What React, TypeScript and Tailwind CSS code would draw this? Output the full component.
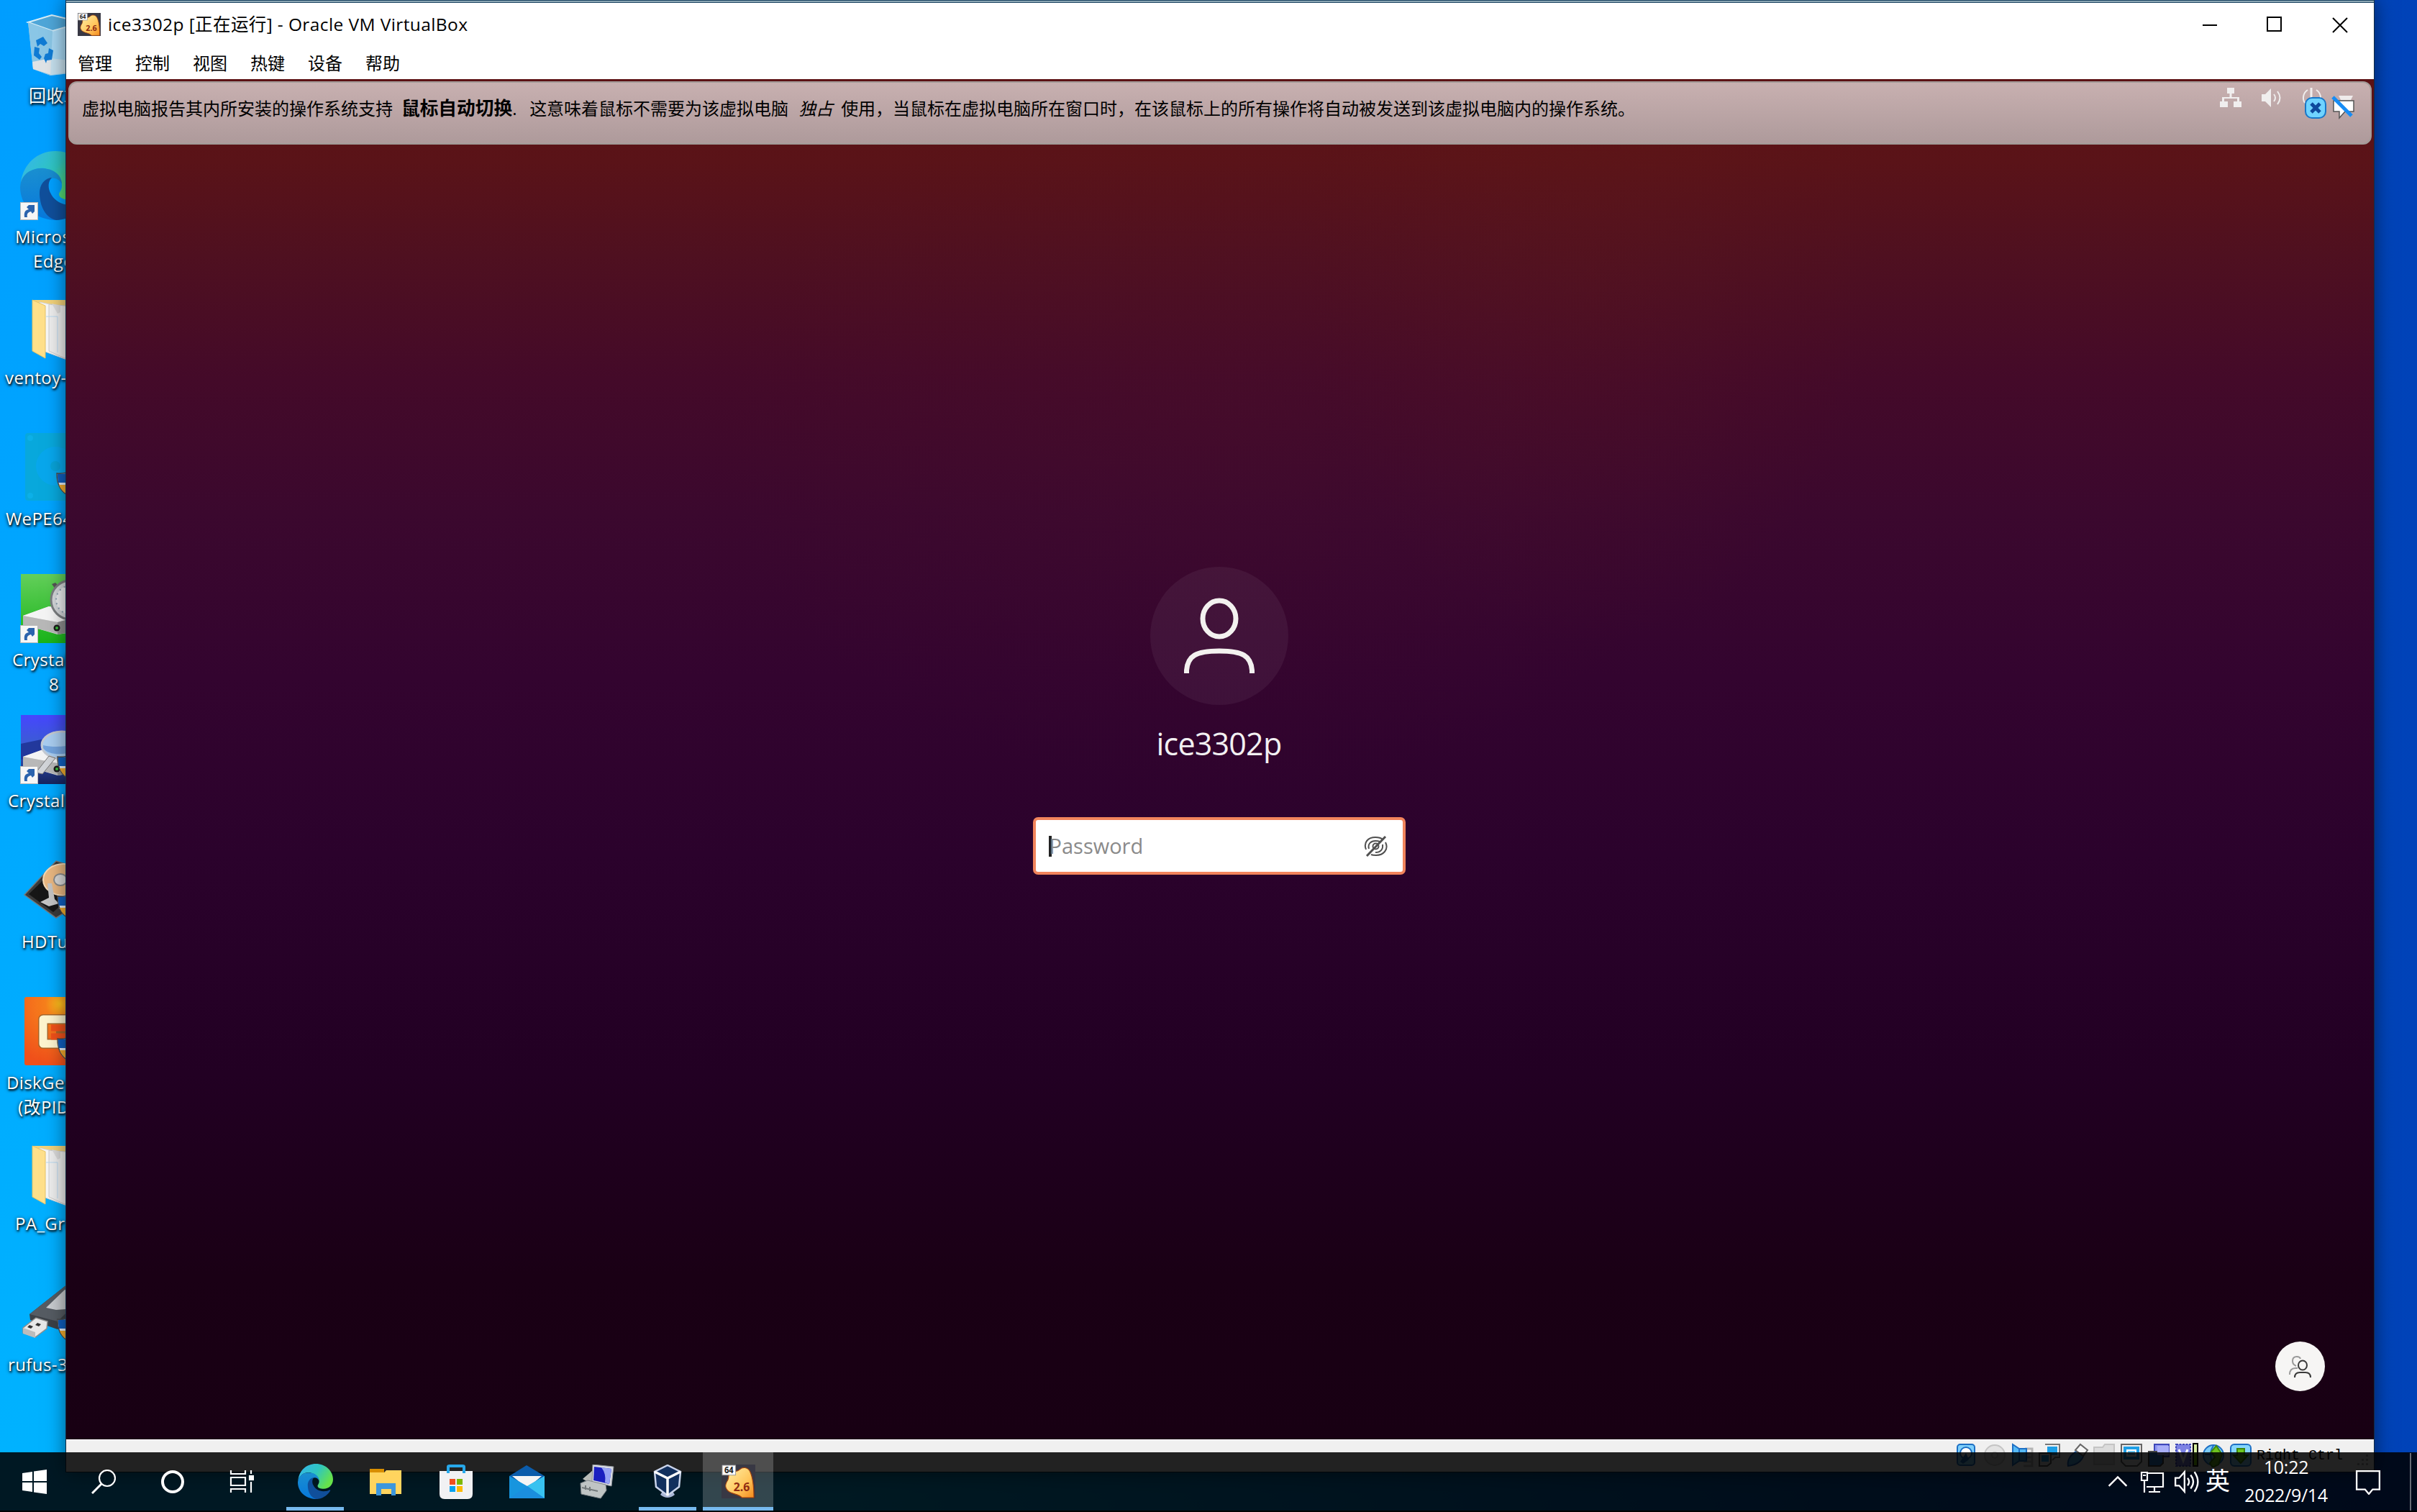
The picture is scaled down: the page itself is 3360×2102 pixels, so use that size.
import React from "react";

type P = { className?: string };

const Arrow = () => (
  <svg className="absolute bottom-0 left-0 size-[25px]" viewBox="0 0 25 25">
    <rect x=".5" y=".5" width="24" height="24" fill="#f6f6f6" stroke="#b9b9b9" />
    <path d="M6 21c-1-7 1-10 6-11l-3-3 3-3h8v9l-3 3-2-3c-4 1-6 3-5 8z" fill="#2b63ad" />
  </svg>
);

const Shield = ({ className = "" }: P) => (
  <svg className={"absolute h-[36px] w-[44px] " + className} viewBox="0 0 44 36">
    <path d="M1 3C8 4 16 2 22 0c6 2 14 4 21 3 0 17-6 27-21 33C7 31 1 20 1 3z" fill="#e9f1fa" stroke="#4b4b4b" strokeWidth="1.5" />
    <path d="M2 4c8 0 14-1 20-3v15H3C2 12 2 8 2 4z" fill="#0f5fc0" />
    <path d="M4 19h18v16C12 31 7 27 4 19z" fill="#f6ac2d" />
  </svg>
);

const Edge = ({ className = "" }: P) => (
  <svg className={className} viewBox="0 0 96 96">
    <defs>
      <linearGradient id="eg1" x1="0" y1="0" x2="1" y2=".5">
        <stop offset="0" stopColor="#35b4f0" />
        <stop offset=".55" stopColor="#2fc6c0" />
        <stop offset="1" stopColor="#66e24a" />
      </linearGradient>
      <linearGradient id="eg2" x1="0" y1="0" x2="0" y2="1">
        <stop offset="0" stopColor="#1a8fd0" />
        <stop offset="1" stopColor="#0778dc" />
      </linearGradient>
    </defs>
    <path d="M1 44C4 18 24 0 49 0c27 0 47 20 47 42 0 16-12 26-25 26-10 0-17-3-17-8 0-3 4-5 4-12 0-10-8-20-24-24C20 22 6 30 1 44z" fill="url(#eg1)" />
    <path d="M0 50c1-17 14-26 30-26 16 0 28 9 28 22-3-6-8-9-14-8-9 2-16 12-14 25 2 15 14 30 26 33C24 98 0 78 0 50z" fill="url(#eg2)" />
    <path d="M27 58c0-10 6-20 17-21-6 6-5 15-2 21 5 11 16 17 28 17 8 0 13-2 17-4 2 0 2 1 1 3-8 13-22 22-38 22-14-3-23-19-23-38z" fill="#104f9b" />
  </svg>
);

const RecycleBin = () => (
  <svg className="h-[96px] w-[96px]" viewBox="0 0 96 96">
    <path d="M11 17 44 7l42 10-8 70-36 4-24-9z" fill="#8ecdf2" />
    <path d="M11 17 44 7l42 10-41 12z" fill="#4fa6d8" stroke="#d8eef8" strokeWidth="2" />
    <path d="M11 17l34 12-3 62-24-9z" fill="#8ac6e6" />
    <path d="M17 72l25-5 36 4-1 14-34 5-25-8z" fill="#dfe3e6" />
    <path d="M45 29l41-12-8 70-36 4z" fill="#b4dcf2" opacity=".6" />
    <g fill="#0f7bd4">
      <path d="M22 42l10-5 6 9-5 4-5-3-4 4z" />
      <path d="M20 51l7 2-1 7 4 5-3 4-8-6z" />
      <path d="M33 67l2-6 4-1 1-7 6 3-2 13-7 1-1 4z" />
    </g>
  </svg>
);

const Folder = () => (
  <svg className="h-[96px] w-[96px]" viewBox="0 0 96 96">
    <path d="M17 11h70v72H40z" fill="#f2d27a" />
    <path d="M27 14l38 8v72l-38-14z" fill="#f7f7f7" stroke="#d5d5d5" />
    <path d="M40 17l22 2 26 3v70H62l-22-10z" fill="#eeeeee" stroke="#cccccc" />
    <path d="M44 16l12 3v9l-4 2z" fill="#dadada" />
    <path d="M36 34h16v50" fill="none" stroke="#b8d8f0" />
    <path d="M17 11l18 8v73l-18-10z" fill="#ffe08a" stroke="#e6c468" />
  </svg>
);

const WePE = () => (
  <svg className="h-[96px] w-[96px]" viewBox="0 0 96 96">
    <rect x="7" width="89" height="94" rx="4" fill="#08a8dc" />
    <ellipse cx="49" cy="46" rx="27" ry="27" fill="#08a7ec" />
    <circle cx="49" cy="46" r="7" fill="#08a2d8" />
    <circle cx="14" cy="7" r="4" fill="#0cb0e8" />
    <circle cx="14" cy="87" r="4" fill="#0cb0e8" />
  </svg>
);

const Drive = ({ blue = false }: { blue?: boolean }) => (
  <svg className="h-[96px] w-[96px]" viewBox="0 0 96 96">
    <defs>
      <linearGradient id="dg" x1="0" y1="0" x2="0" y2="1">
        <stop offset="0" stopColor="#63cf5a" />
        <stop offset="1" stopColor="#19b41a" />
      </linearGradient>
      <linearGradient id="db" x1="0" y1="0" x2="0" y2="1">
        <stop offset="0" stopColor="#4646ff" />
        <stop offset=".45" stopColor="#3a5ed0" />
        <stop offset="1" stopColor="#16245e" />
      </linearGradient>
    </defs>
    <rect x="1" width="95" height="96" fill={blue ? "url(#db)" : "url(#dg)"} />
    {blue && <path d="M1 40l95-20v30L1 62z" fill="#22389c" />}
    <path d="M4 58l36-13 56 9v24l-44 6L4 70z" fill="#dadada" />
    <path d="M4 58l36-13 56 9-44 13z" fill="#f4f4f4" />
    <path d="M4 58l48 9v16L4 71z" fill="#b8b8b8" />
    <path d="M52 67l44-12v22l-44 7z" fill="#8e8e8e" />
    <circle cx="51" cy="75" r="4.5" fill="#1c1c1c" />
    <circle cx="51" cy="75" r="2" fill="#3bbf3b" />
    {blue ? (
      <>
        <ellipse cx="58" cy="42" rx="28" ry="19" fill="#a9cdf0" stroke="#c4cad2" strokeWidth="3" />
        <path d="M32 42c16 4 36 2 52-4v8c-14 10-44 12-52 0z" fill="#5c93d6" opacity=".7" />
        <path d="M40 57L22 80l9 2 18-22z" fill="#d2d5d9" stroke="#777" />
      </>
    ) : (
      <>
        <path d="M44 14l5-2 8 8-5 5z" fill="#555" />
        <circle cx="70" cy="36" r="27" fill="#d4d7da" stroke="#7b7e80" strokeWidth="3" />
        <circle cx="70" cy="36" r="20" fill="#eceef0" stroke="#8aa0b0" strokeWidth="2" strokeDasharray="2 5" />
      </>
    )}
  </svg>
);

const HDTune = () => (
  <svg className="h-[96px] w-[96px]" viewBox="0 0 96 96">
    <path d="M6 54L50 7l46 14v36L50 86z" fill="#3a3a3a" stroke="#777" strokeWidth="1.5" />
    <path d="M12 53L46 20l20 40-20 18z" fill="#161616" />
    <ellipse cx="60" cy="33" rx="28" ry="22" fill="#e9b781" stroke="#f3d9b8" strokeWidth="2" />
    <ellipse cx="56" cy="33" rx="9" ry="8" fill="#d9d9d9" stroke="#8c8c8c" strokeWidth="2" />
    <path d="M38 38h6l4 22 6 6-14 4-12-6 12-6z" fill="#c4c4c4" />
    <path d="M52 58l12-4v18l-10 2z" fill="#999" />
  </svg>
);

const DiskGenius = () => (
  <svg className="h-[96px] w-[96px]" viewBox="0 0 96 96">
    <defs>
      <radialGradient id="dgn" cx=".55" cy=".1" r=".9">
        <stop offset="0" stopColor="#ffc21c" />
        <stop offset=".25" stopColor="#f7801c" />
        <stop offset="1" stopColor="#f0501a" />
      </radialGradient>
    </defs>
    <rect x="6" width="90" height="95" rx="3" fill="url(#dgn)" />
    <path d="M96 31H32v34h64M96 50H50" fill="none" stroke="#a8662a" strokeWidth="14" strokeLinejoin="round" />
    <path d="M96 31H32v34h64" fill="none" stroke="#fdf4cf" strokeWidth="11" strokeLinejoin="round" />
    <path d="M96 49H72" stroke="#fdf4cf" strokeWidth="11" strokeLinecap="round" />
    <path d="M43 43h24M43 55h24" stroke="#f0501a" strokeWidth="9" />
  </svg>
);

const Usb = () => (
  <svg className="h-[96px] w-[96px]" viewBox="0 0 96 96">
    <path d="M13 49L70 4l26 12v30L52 70l-38-13z" fill="#3c4147" />
    <path d="M13 49L70 4l26 12-44 43z" fill="#565c63" />
    <path d="M36 40l26-25 18 4v22l-30 2z" fill="#c9ccd0" />
    <path d="M4 68l18-14 16 5-1 10-16 12-17-6z" fill="#e8e8e8" stroke="#8f8f8f" strokeWidth="1.5" />
    <path d="M4 68l17 6v8L4 76z" fill="#bcbcbc" />
    <path d="M13 64l5 2-3 3-5-2zM24 61l5 2-3 3-5-2z" fill="#333" />
  </svg>
);

const Label = ({ pl, lines }: { pl: string; lines: [string, string][] | string }) => (
  <div className={"mt-[6px] whitespace-nowrap text-[24px] leading-[34px] tracking-[0.4px] text-white [text-shadow:1px_2px_3px_#000,0_1px_5px_#000b] " + pl}>
    {typeof lines === "string" ? lines : lines.map(([t, c]) => <div key={t} className={c}>{t}</div>)}
  </div>
);

const desktop: { icon: React.ReactNode; arrow?: boolean; shield?: string; pl: string; lines: string | [string, string][] }[] = [
  { icon: <RecycleBin />, pl: "pl-[40px]", lines: "回收站" },
  { icon: <Edge className="size-[96px]" />, arrow: true, pl: "", lines: [["Microsoft", "pl-[21px]"], ["Edge", "pl-[46px]"]] },
  { icon: <Folder />, pl: "pl-[7px]", lines: "ventoy-1.0" },
  { icon: <WePE />, shield: "left-[50px] top-[53px]", pl: "pl-[8px]", lines: "WePE64_V2" },
  { icon: <Drive />, arrow: true, pl: "", lines: [["CrystalDisk", "pl-[17px]"], ["8", "pl-[68px]"]] },
  { icon: <Drive blue />, arrow: true, shield: "left-[51px] top-[55px]", pl: "pl-[11px]", lines: "CrystalDiskInfo" },
  { icon: <HDTune />, shield: "left-[51px] top-[53px]", pl: "pl-[30px]", lines: "HDTune" },
  { icon: <DiskGenius />, shield: "left-[51px] top-[55px]", pl: "", lines: [["DiskGenius", "pl-[9px]"], ["(改PID)", "pl-[25px]"]] },
  { icon: <Folder />, pl: "pl-[21px]", lines: "PA_Group" },
  { icon: <Usb />, shield: "left-[51px] top-[53px]", pl: "pl-[11px]", lines: "rufus-3.18" },
];

const KernelIcon = ({ className = "" }: P) => (
  <svg className={className} viewBox="0 0 48 48">
    <defs>
      <linearGradient id="kg" x1="0" y1="0" x2="1" y2="1">
        <stop offset="0" stopColor="#fff0a8" />
        <stop offset=".6" stopColor="#ffc65c" />
        <stop offset="1" stopColor="#f58a1c" />
      </linearGradient>
    </defs>
    <rect width="48" height="48" fill="#383844" />
    <path d="M26 7c4-4 11-3 14 2 3 6 6 16 6 38H29c-4-5-14-5-19-9-6-5-5-10-1-16 2-5 0-8 3-10 5-3 10-1 14-5z" fill="url(#kg)" stroke="#a3430d" strokeWidth="1.2" />
    <text x="17" y="38" fontSize="16" fontWeight="700" fill="#8e2a12" fontFamily="Open Sans, sans-serif" textLength="23" lengthAdjust="spacingAndGlyphs">2.6</text>
    <rect x="1" y="1" width="19" height="14" fill="#fafafa" stroke="#999" />
    <text x="4" y="12.5" fontSize="12" fontWeight="700" fill="#222" fontFamily="Open Sans, sans-serif" textLength="13" lengthAdjust="spacingAndGlyphs">64</text>
  </svg>
);

const TitleBar = () => (
  <div className="flex h-[62px] shrink-0 items-center bg-white pb-[3px] pl-[16px]">
    <KernelIcon className="size-[32px]" />
    <span className="ml-[10px] whitespace-pre text-[24.5px] leading-[32px] tracking-[0.4px] text-black">ice3302p [正在运行] - Oracle VM VirtualBox</span>
    <svg className="ml-auto mr-[35px] h-[24px] w-[204px]" viewBox="0 0 204 24" fill="none" stroke="#000" strokeWidth="2">
      <path d="M1 13h20M182 3l20 20M202 3l-20 20" />
      <rect x="91" y="2" width="19" height="19" />
    </svg>
  </div>
);

const Menu = () => (
  <div className="flex h-[44px] shrink-0 gap-[32px] bg-white pl-[16px] text-[24px] leading-[43px] text-black">
    {["管理", "控制", "视图", "热键", "设备", "帮助"].map((m) => <span key={m} className="w-[48px]">{m}</span>)}
  </div>
);

const Banner = () => (
  <div className="relative mx-[3px] mt-[3px] flex h-[88px] shrink-0 rounded-[12px] border-2 border-[#a39b98] bg-gradient-to-b from-[#c8b0b0] to-[#ae9a9b] pl-[17px] text-black">
    <p className="flex h-[72px] items-center whitespace-pre text-[24px] leading-[30px]">
      <span>虚拟电脑报告其内所安装的操作系统支持</span>
      <b className="ml-[12px] text-[25.7px]">鼠标自动切换</b>
      <span className="w-[24px]">.</span>
      <span>这意味着鼠标不需要为该虚拟电脑</span>
      <i className="ml-[14px] mr-[11px]">独占</i>
      <span>使用，当鼠标在虚拟电脑所在窗口时，在该鼠标上的所有操作将自动被发送到该虚拟电脑内的操作系统。</span>
    </p>
    <svg className="absolute right-[17px] top-[4px] h-[50px] w-[194px]" viewBox="0 0 194 50">
      <g fill="#f0eeee">
        <path d="M12 3h10v8h-3.500v5H29v6h3v8H21v-8h5v-4H8v4h5v8H2v-8h3v-6h10.500v-5H12z" />
        <path d="M60 12h5l8-8v26l-8-8h-5z" />
      </g>
      <g fill="none" stroke="#f0eeee" strokeWidth="2">
        <path d="M77 12q4 5 0 10M82 8q7 9 0 18M124 6a13 13 0 0 0-4 18M136 6a13 13 0 0 1 4 18" />
        <path d="M129 3v14" strokeWidth="3" />
      </g>
      <rect x="121" y="17" width="28" height="28" rx="9" fill="#6fd3ff" stroke="#1877c8" strokeWidth="2" />
      <path d="M129 25l12 12M141 25l-12 12" stroke="#0e4a9c" strokeWidth="5" />
      <path d="M167 14h20l-3 6h-14z" fill="#efebeb" />
      <path d="M160 21h28v15h-12l-8 9v-9h-8z" fill="#fff" stroke="#555" strokeWidth="1.5" />
      <path d="M159 16l26 26" stroke="#168cf5" strokeWidth="5" />
    </svg>
  </div>
);

const Guest = () => (
  <div className="relative flex min-h-0 flex-1 flex-col bg-[radial-gradient(ellipse_400px_520px_at_66%_14%,#6a201a28,transparent),radial-gradient(ellipse_700px_500px_at_50%_26%,#5a182c20,transparent),linear-gradient(to_bottom,#5c1114_0%,#5a1318_6%,#4f1020_13%,#440a29_22%,#3b082e_32%,#33042f_44%,#2b022c_57%,#220023_73%,#1a0015_88%,#180013_100%)]">
    <Banner />
    <div className="mt-[587px] flex flex-col items-center pr-[3px]">
      <div className="flex size-[192px] items-center justify-center rounded-full bg-white/[0.055]">
        <svg className="h-[108px] w-[100px]" viewBox="0 0 100 108" fill="none" stroke="#f3f1ef" strokeWidth="7">
          <ellipse cx="50" cy="30" rx="23" ry="25" />
          <path d="M4.500 106V102C6 82 17 75 50 75s44 7 45.500 27v4" />
        </svg>
      </div>
      <div className="mt-[24px] text-[43px] leading-[60px] tracking-[-0.8px] text-[#f2f0f2]">ice3302p</div>
      <div className="mt-[72px] flex h-[80px] w-[518px] items-center rounded-[7px] border-[4px] border-[#f1845c] bg-white pl-[18px] pr-[21px]">
        <span className="h-[29px] w-[4px] bg-[#222]" />
        <span className="-ml-[3px] text-[29px] leading-[40px] text-[#8a8a8a]">Password</span>
        <svg className="ml-auto h-[30px] w-[33px]" viewBox="0 0 33 30" fill="none" stroke="#505050" strokeWidth="2">
          <path d="M3 20C-1 10 6 3 16 3c5 0 8 1 10 3M30 10c5 10-3 18-13 18-3 0-5 0-7-1" />
          <path d="M7 19c-2-7 3-11 9-11 3 0 4 0 6 1M26 13c1 7-3 11-10 11" />
          <circle cx="16.500" cy="15.500" r="4" />
          <path d="M4 29L30 2" strokeWidth="3" />
        </svg>
      </div>
    </div>
    <div className="absolute bottom-[67px] right-[68px] flex size-[69px] items-center justify-center rounded-full bg-[#f6f5f4]">
      <svg className="h-[32px] w-[34px]" viewBox="0 0 34 32" fill="none" strokeWidth="2">
        <path d="M11 15q-5-2-5-7 0-6 6-6 4 0 5 3M2 27q0-9 8-9h3" stroke="#999" />
        <ellipse cx="20" cy="14" rx="6" ry="6.500" stroke="#3a3a3a" />
        <path d="M9 31q0-7 7-7h8q7 0 7 7" stroke="#3a3a3a" />
      </svg>
    </div>
  </div>
);

const StatusBar = () => (
  <div className="flex h-[45px] shrink-0 justify-end border-t border-white bg-[#f0f0f0] pr-[4px] pt-[4px]">
    <svg className="h-[34px] w-[412px]" viewBox="0 0 412 34" strokeWidth="2">
      <rect x="2" y="2" width="24" height="29" rx="4" fill="#7fd0fb" stroke="#1d6fc4" />
      <circle cx="14" cy="14" r="8" fill="#fff" stroke="#1d6fc4" />
      <path d="M14 14l-8 12 4 3 8-6z" fill="#1d6fc4" />
      <circle cx="54" cy="17" r="14" fill="#e3e3e3" stroke="#c4c4c4" />
      <circle cx="54" cy="17" r="4" fill="#f0f0f0" stroke="#c4c4c4" />
      <path d="M96 8h10v24H94M94 14h12M94 20h12M94 26h12" fill="none" stroke="#b5b5b5" strokeWidth="3" />
      <path d="M79 2l9 6h10v17H88l-9 6z" fill="#56baf5" stroke="#1d6fc4" />
      <path d="M88 8v17" stroke="#1d6fc4" />
      <path d="M124 2h20v18h-6l-4 4" fill="#f4f4f4" stroke="#777" />
      <rect x="127" y="5" width="14" height="12" fill="#1e9fe6" />
      <path d="M116 14h16v14l-5 4h-11z" fill="#dedede" stroke="#555" />
      <rect x="119" y="17" width="10" height="9" fill="#1e9fe6" />
      <path d="M156 32q-2-10 8-18l6-4 8 6q-4 14-22 16z" fill="#53aef2" stroke="#1a5fb4" />
      <path d="M166 10l7-8 10 8-6 8z" fill="#f6f6f6" stroke="#666" />
      <path d="M192 30V6h12l3-4h13v28z" fill="#dcdcdc" stroke="#c4c4c4" />
      <path d="M230 2h28v24l-6 6h-16l-6-6z" fill="#eee" stroke="#666" />
      <rect x="233" y="5" width="22" height="18" fill="#1e9fe6" />
      <rect x="238" y="10" width="12" height="8" fill="#6ccbfa" stroke="#fff" />
      <rect x="276" y="2" width="20" height="17" fill="#8f97f2" stroke="#3f48b8" />
      <path d="M268 12h20v16l-4 4h-16z" fill="#2b7fd0" stroke="#444" />
      <rect x="280" y="4" width="16" height="13" fill="#a9aff8" />
      <rect x="306" y="2" width="20" height="30" fill="#7d83e4" stroke="#3f48b8" strokeDasharray="3 1.500" />
      <path d="M310 9l6 16 6-16" fill="none" stroke="#fff" strokeWidth="3" />
      <rect x="330" y="1" width="6" height="31" fill="#d6f0a0" stroke="#000" />
      <rect x="331" y="15" width="4" height="16" fill="#7fd000" />
      <circle cx="358" cy="17" r="14" fill="#7ccdf8" stroke="#1d6fc4" />
      <path d="M346 16h24M358 4q-8 12 0 26" fill="none" stroke="#1d6fc4" />
      <path d="M362 4l8 12-5 14-8 4-4-6 7-8-5-8z" fill="#6fc221" stroke="#3f8a0c" />
      <rect x="382" y="2" width="28" height="30" rx="5" fill="#85d6fb" stroke="#1d6fc4" />
      <path d="M391 8h10v9h5l-10 11-10-11h5z" fill="#6cc921" stroke="#3d850c" />
    </svg>
    <span className="ml-[6px] mt-[5px] font-['Liberation_Mono',monospace] text-[20px] leading-[26px] text-black">Right Ctrl</span>
    <svg className="ml-[20px] mr-[3px] mt-[16px] size-[16px]" viewBox="0 0 16 16" fill="#a8a8a8">
      <path d="M12 0h3v3h-3zM6 6h3v3H6zM12 6h3v3h-3zM0 12h3v3H0zM6 12h3v3H6zM12 12h3v3h-3z" />
    </svg>
  </div>
);

const White = ({ children, className = "size-[34px]" }: { children: React.ReactNode; className?: string }) => (
  <svg className={className} viewBox="0 0 34 34" fill="none" stroke="#fff" strokeWidth="2.200">{children}</svg>
);

const apps: { icon: React.ReactNode; run?: boolean; active?: boolean }[] = [
  { icon: <Edge className="size-[49px]" />, run: true },
  {
    icon: (
      <svg className="h-[40px] w-[44px]" viewBox="0 0 44 40">
        <path d="M0 2h20v6H0z" fill="#d98f00" />
        <path d="M0 7h20l3-3h21v33H0z" fill="#ffd45e" />
        <path d="M9 22h27v17h-6V30H16v9H9z" fill="#3d97dc" />
      </svg>
    ),
  },
  {
    icon: (
      <svg className="size-[48px]" viewBox="0 0 48 48">
        <path d="M1 9h46v32q0 7-7 7H8q-7 0-7-7z" fill="#f1f1f3" />
        <path d="M13 12V3q0-1 2-1h18q2 0 2 1v9" fill="none" stroke="#27a8ea" strokeWidth="4" />
        <path d="M15 20h8v8h-8z" fill="#f04e1f" /><path d="M25 20h8v8h-8z" fill="#7db800" />
        <path d="M15 30h8v8h-8z" fill="#06a3f0" /><path d="M25 30h8v8h-8z" fill="#fdb900" />
      </svg>
    ),
  },
  {
    icon: (
      <svg className="h-[46px] w-[49px]" viewBox="0 0 49 46">
        <path d="M0 15L24 0l25 15v8H0z" fill="#0b5cab" />
        <path d="M4 15h41L25 32z" fill="#f5f5f5" />
        <path d="M0 15l25 14 24-14v31H0z" fill="#1795de" />
        <path d="M25 29l24-14v31z" fill="#38c2f0" /><path d="M0 46l25-17 24 17z" fill="#1b8ede" />
      </svg>
    ),
  },
  {
    icon: (
      <svg className="size-[48px]" viewBox="0 0 48 48">
        <path d="M4 20l14-12 14 16-8 8z" fill="#b9bcb8" />
        <path d="M18 0l29 3-3 27-27-6z" fill="#d8dbe2" stroke="#8b8f96" />
        <path d="M20 3l24 3-3 21-22-5z" fill="#1a1fc0" />
        <path d="M30 4l14 2-3 21-6-2q2-12-5-21z" fill="#97a4f4" />
        <path d="M1 26l10-4 25 6 1 8-8 11L2 41z" fill="#bfc4c4" stroke="#80868a" />
        <path d="M3 32l22 5M8 29v6M14 31v6" stroke="#747a7c" strokeWidth="2" />
      </svg>
    ),
  },
  {
    icon: (
      <svg className="h-[48px] w-[40px]" viewBox="0 0 40 48">
        <path d="M10 42q10 8 20 0l-5-8H15z" fill="#aab6d6" />
        <path d="M20 1l18 9-2 21L20 43 4 31 2 10z" fill="#12305e" stroke="#c9d3ea" strokeWidth="2.500" />
        <path d="M2 10l18 9 18-9M20 19v24" fill="none" stroke="#fff" strokeWidth="3.500" />
      </svg>
    ),
    run: true,
  },
  { icon: <KernelIcon className="size-[47px]" />, run: true, active: true },
];

const Taskbar = () => (
  <div className="absolute inset-x-0 bottom-0 flex h-[83px] border-b-2 border-black bg-black/[0.86] text-white">
    <div className="flex w-[96px] items-center justify-center">
      <svg className="size-[34px]" viewBox="0 0 34 34" fill="#fff"><path d="M0 5l14-2v13H0zM16 2.500L34 0v16H16zM0 18h14v13L0 29zM16 18h18v16l-18-2.500z" /></svg>
    </div>
    <div className="flex w-[96px] items-center justify-center"><White><circle cx="22" cy="12" r="11" /><path d="M14 20L1 33" strokeWidth="3" /></White></div>
    <div className="flex w-[96px] items-center justify-center"><White><circle cx="17" cy="17" r="14" strokeWidth="4" /></White></div>
    <div className="flex w-[101px] items-center justify-center pr-[5px]">
      <White><path d="M2 1v5h20V1M2 32v-5h20v5M2 11h20v11H2zM30 1v5M30 17v15" /><rect x="28" y="9" width="5" height="5" fill="#fff" /></White>
    </div>
    {apps.map((a, i) => (
      <div key={i} className={"relative flex w-[98px] items-center justify-center " + (a.active ? "bg-white/20" : "")}>
        {a.icon}
        {a.run && <div className={"absolute bottom-0 h-[5px] bg-[#76b9ed] " + (a.active ? "inset-x-0" : "inset-x-[9px]")} />}
      </div>
    ))}
    <div className="ml-auto flex items-center">
      <White className="size-[28px]"><path d="M2 24L17 9l15 15" strokeWidth="3" /></White>
      <White className="ml-[17px] size-[34px]"><path d="M9 5h23v19H9M20 24v6M12 31h16M2 4h8v11H2zM6 15v17M4 8h4" /></White>
      <White className="ml-[13px] size-[36px]"><path d="M2 12h5l7-8v26l-7-8H2zM18 12q4 5 0 10M22 8q7 9 0 18M27 4q9 13 0 26" /></White>
      <span className="relative top-[-2px] ml-[8px] text-[34px] leading-[40px]">英</span>
      <div className="relative top-[-1px] ml-[14px] flex w-[128px] flex-col items-center text-[25px] leading-[39px] tracking-[-0.3px]">
        <span>10:22</span>
        <span>2022/9/14</span>
      </div>
      <White className="ml-[32px] size-[36px]"><path d="M2 3h30v24h-9l-5 6-5-6H2z" /></White>
      <div className="ml-[40px] mr-[8px] h-[80px] w-[2px] bg-white/40" />
    </div>
  </div>
);

export default function App() {
  return (
    <div className="relative h-[2102px] w-[3360px] overflow-hidden bg-[linear-gradient(to_right,#00a8f8_0%,#00aeee_35%,#0060c0_75%,#0042b8_100%)] font-['Open_Sans','Noto_Sans_CJK_SC',sans-serif]">
      <div className="flex h-[2019px] w-[92px] flex-col overflow-hidden bg-gradient-to-b from-[#009dff] to-[#00b2ff] pt-[14px]">
        {desktop.map((d, i) => (
          <div key={i} className="h-[196px] w-[92px] shrink-0">
            <div className="relative ml-[28px] size-[96px]">
              {d.icon}
              {d.arrow && <Arrow />}
              {d.shield && <Shield className={d.shield} />}
            </div>
            <Label pl={d.pl} lines={d.lines} />
          </div>
        ))}
      </div>
      <div className="absolute left-[92px] top-0 flex h-[2046px] w-[3208px] flex-col shadow-[0_0_26px_#0008,0_0_0_1px_#1c3c5c]">
        <div className="h-[4px] shrink-0 border-y border-[#1d4663] bg-[#8ba6b4]" />
        <TitleBar />
        <Menu />
        <Guest />
        <StatusBar />
      </div>
      <Taskbar />
    </div>
  );
}
